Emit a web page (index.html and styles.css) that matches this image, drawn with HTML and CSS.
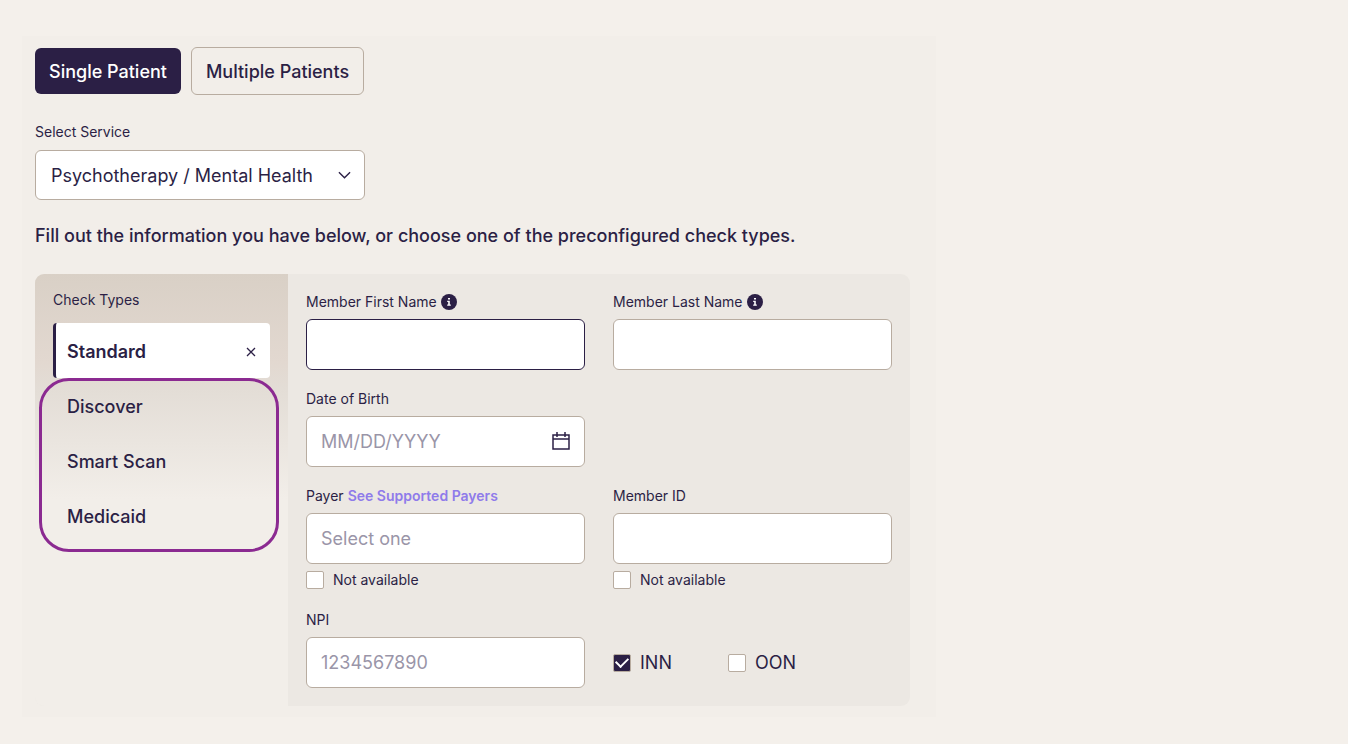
FILE: index.html
```html
<!DOCTYPE html>
<html lang="en">
<head>
<meta charset="utf-8">
<meta name="viewport" content="width=device-width, initial-scale=1">
<title>Eligibility check</title>
<link rel="stylesheet" href="styles.css">
</head>
<body>
<main class="page">
  <div class="modes">
    <button type="button" class="mode mode-active">Single Patient</button>
    <button type="button" class="mode mode-outline">Multiple Patients</button>
  </div>

  <div class="service">
    <label class="label" for="service">Select Service</label>
    <div class="select-wrap">
      <select id="service" class="select">
        <option>Psychotherapy / Mental Health</option>
      </select>
      <svg class="chevron" viewBox="0 0 14 8" aria-hidden="true"><path d="M1 1l6 6 6-6"/></svg>
    </div>
  </div>

  <p class="intro">Fill out the information you have below, or choose one of the preconfigured check types.</p>

  <div class="panel">
    <nav class="sidebar" aria-labelledby="types-title">
      <h2 class="label types-title" id="types-title">Check Types</h2>
      <button type="button" class="type type-active">Standard
        <svg class="close" viewBox="0 0 10 10" aria-hidden="true"><path d="M1 1l8 8M9 1l-8 8"/></svg>
      </button>
      <div class="others">
        <button type="button" class="type">Discover</button>
        <button type="button" class="type">Smart Scan</button>
        <button type="button" class="type">Medicaid</button>
      </div>
    </nav>

    <form class="form">
      <div class="field">
        <label class="label" for="first">Member First Name
          <svg class="info" viewBox="0 0 16 16" aria-hidden="true"><circle cx="8" cy="8" r="8"/><path d="M7 4h2v1.6H7zM6.2 6.8h2.6v3.8h1v1.2H6.2v-1.2h1V8h-1z"/></svg>
        </label>
        <input id="first" class="input input-focus" type="text">
      </div>
      <div class="field">
        <label class="label" for="last">Member Last Name
          <svg class="info" viewBox="0 0 16 16" aria-hidden="true"><circle cx="8" cy="8" r="8"/><path d="M7 4h2v1.6H7zM6.2 6.8h2.6v3.8h1v1.2H6.2v-1.2h1V8h-1z"/></svg>
        </label>
        <input id="last" class="input" type="text">
      </div>
      <div class="field field-start">
        <label class="label" for="dob">Date of Birth</label>
        <div class="date">
          <input id="dob" class="input" type="text" placeholder="MM/DD/YYYY">
          <svg class="calendar" viewBox="0 0 18 18" aria-hidden="true"><path d="M1 3h16v14H1zM1 7h16M5 0v5M13 0v5"/></svg>
        </div>
      </div>
      <div class="field field-start">
        <div class="label"><label for="payer">Payer</label> <a class="link" href="#">See Supported Payers</a></div>
        <input id="payer" class="input" type="text" placeholder="Select one">
        <label class="check check-small"><input class="box" type="checkbox">Not available</label>
      </div>
      <div class="field">
        <label class="label" for="member">Member ID</label>
        <input id="member" class="input" type="text">
        <label class="check check-small"><input class="box" type="checkbox">Not available</label>
      </div>
      <div class="field">
        <label class="label" for="npi">NPI</label>
        <input id="npi" class="input" type="text" placeholder="1234567890">
      </div>
      <div class="networks">
        <label class="check"><input class="box" type="checkbox" checked>INN</label>
        <label class="check"><input class="box" type="checkbox">OON</label>
      </div>
    </form>
  </div>
</main>
</body>
</html>
```
FILE: styles.css
```css
:root {
  --ink: #2b1f45;
  --line: #b8aca0;
  --muted: #9a95a8;
}

* {
  box-sizing: border-box;
}

body {
  margin: 0;
  padding: 36px 22px 27px;
  background: #f4f0eb;
  color: var(--ink);
  font: 18px/24px Inter, "Liberation Sans", sans-serif;
}

button,
input,
select {
  margin: 0;
  color: inherit;
  font: inherit;
}

svg {
  fill: none;
  stroke: var(--ink);
}

.page {
  max-width: 914px;
  padding: 11px 26px 11px 13px;
  background: #f2eee9;
}

.modes {
  display: flex;
  align-items: center;
  gap: 10px;
}

.mode {
  padding: 12px 14px 10px;
  border: 0;
  border-radius: 6px;
  font-weight: 500;
}

.mode-active {
  background: var(--ink);
  color: #fff;
}

.mode-outline {
  border: 1px solid var(--line);
  background: transparent;
}

.service {
  display: flex;
  flex-direction: column;
  gap: 8px;
  max-width: 330px;
  margin-top: 27px;
}

.label {
  margin: 0;
  font-size: 14px;
  font-weight: 400;
  line-height: 20px;
}

.select-wrap,
.date {
  position: relative;
}

.select {
  display: block;
  appearance: none;
  width: 100%;
  height: 50px;
  padding: 2px 40px 0 15px;
  border: 1px solid var(--line);
  border-radius: 6px;
  background: #fff;
}

.chevron {
  position: absolute;
  top: 21px;
  right: 14px;
  width: 13px;
  height: 8px;
  stroke-width: 1.5;
  pointer-events: none;
}

.intro {
  margin: 24px 0 26px;
  font-weight: 500;
}

.panel {
  display: flex;
  border-radius: 9px;
  background: #ece8e3;
  overflow: hidden;
}

.sidebar {
  flex: 0 0 253px;
  padding: 16px 18px;
  background: linear-gradient(#d9d0c6 0, #e2d8d0 88px, #e3ddd6 115px, #f2eee9 225px);
}

.types-title {
  margin-bottom: 13px;
}

.type {
  display: flex;
  align-items: center;
  justify-content: space-between;
  width: 100%;
  height: 55px;
  padding: 2px 14px 0;
  border: 0;
  background: transparent;
  font-weight: 500;
}

.type-active {
  padding-left: 11px;
  border-left: 3px solid var(--ink);
  border-radius: 4px;
  background: #fff;
  font-weight: 600;
}

.close {
  width: 10px;
  height: 10px;
  stroke-width: 1.3;
}

.others {
  position: relative;
}

.others::after {
  content: "";
  position: absolute;
  inset: 0 -9px -9px -14px;
  border: 3px solid #8b2a91;
  border-radius: 30px;
  pointer-events: none;
}

.form {
  flex: 1;
  display: grid;
  grid-template-columns: 1fr 1fr;
  align-content: start;
  gap: 19px 28px;
  padding: 18px;
}

.field {
  display: flex;
  flex-direction: column;
  gap: 7px;
}

.field-start {
  grid-column-start: 1;
}

.field > .label {
  display: flex;
  align-items: center;
  gap: 4px;
}

.input {
  display: block;
  width: 100%;
  height: 51px;
  padding: 0 14px;
  border: 1px solid var(--line);
  border-radius: 6px;
  background: #fff;
  outline: 0;
}

.input::placeholder {
  color: var(--muted);
  opacity: 1;
}

.input-focus {
  border-color: var(--ink);
}

.info {
  width: 16px;
  height: 16px;
  fill: var(--ink);
  stroke: none;
}

.info path {
  fill: #fff;
}

.calendar {
  position: absolute;
  top: 16px;
  right: 15px;
  width: 18px;
  height: 18px;
  stroke-width: 1.5;
}

.link {
  color: #8f7bea;
  font-weight: 600;
  text-decoration: none;
}

.check {
  display: flex;
  align-items: center;
  gap: 9px;
}

.check-small {
  font-size: 14px;
  line-height: 18px;
}

.box {
  appearance: none;
  width: 18px;
  height: 18px;
  border: 1px solid var(--line);
  border-radius: 2px;
  background: #fff;
}

.field:has(.check-small) {
  padding-bottom: 2px;
}

.box:checked {
  display: grid;
  place-items: center;
  background: var(--ink);
}

.box:checked::after {
  content: "";
  width: 10px;
  height: 6px;
  margin-bottom: 4px;
  border: solid #fff;
  border-width: 0 0 2px 2px;
  transform: rotate(-45deg);
}

.networks {
  display: flex;
  align-items: center;
  align-self: end;
  gap: 56px;
  height: 50px;
}
```
